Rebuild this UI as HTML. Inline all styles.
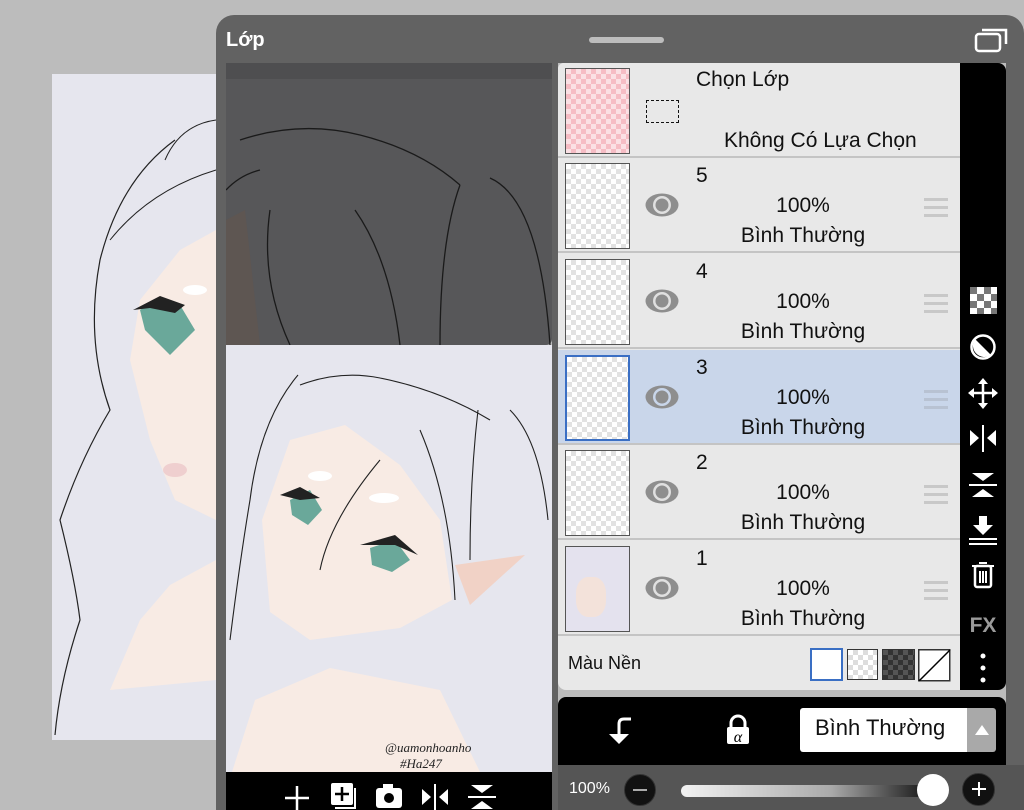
<!DOCTYPE html>
<html><head><meta charset="utf-8"><style>
*{margin:0;padding:0;box-sizing:border-box}
body{width:1024px;height:810px;overflow:hidden;background:#bcbcbc;font-family:"Liberation Sans","Noto Sans CJK SC",sans-serif;position:relative}
.a{position:absolute}
.row{position:absolute;left:558px;width:402px;height:95px;background:#e8e8e8;border-bottom:2px solid #c4c4c4}
.th{position:absolute;left:7px;top:5px;width:65px;height:86px;border:1.5px solid #555;background-color:#fff;background-image:linear-gradient(45deg,#e2e2e2 25%,transparent 25%,transparent 75%,#e2e2e2 75%),linear-gradient(45deg,#e2e2e2 25%,transparent 25%,transparent 75%,#e2e2e2 75%);background-size:10px 10px;background-position:0 0,5px 5px}
.num{position:absolute;left:138px;top:6px;font-size:21px;color:#111}
.pct{position:absolute;left:160px;width:170px;text-align:center;top:36px;font-size:21px;color:#111}
.mode{position:absolute;left:160px;width:170px;text-align:center;top:66px;font-size:21px;color:#111}
.eye{position:absolute;left:87px;top:35px}
.ham{position:absolute;left:366px;top:40px;width:24px}
.ham i{display:block;height:3px;background:#c8c8c8;margin-bottom:5px}
</style></head><body>
<svg class="a" style="left:0;top:0" width="1024" height="810">
<rect x="52" y="74" width="170" height="666" fill="#e6e6ee"/>
<path d="M216 230 L180 250 L140 300 L130 360 L150 440 L175 500 L216 520Z" fill="#f8ebe4"/>
<path d="M216 560 L170 585 L140 620 L110 690 L216 680Z" fill="#f8ebe4"/>
<path d="M175 140 Q120 180 100 260 Q85 340 110 410 Q80 460 60 520 Q75 580 80 620 Q60 680 55 735" fill="none" stroke="#222" stroke-width="1.2"/>
<path d="M216 120 Q180 125 165 160 M216 170 Q150 190 110 240" fill="none" stroke="#222" stroke-width="1"/>
<path d="M140 310 L155 300 L180 305 L195 330 L170 355 L145 330Z" fill="#6aa89a"/>
<path d="M133 310 L160 296 L185 305 L175 313 L150 308Z" fill="#222"/>
<ellipse cx="195" cy="290" rx="12" ry="5" fill="#fff"/>
<ellipse cx="175" cy="470" rx="12" ry="7" fill="#efcfcf"/>
<rect x="226" y="63" width="326" height="282" rx="6" fill="#575759"/>
<rect x="226" y="63" width="326" height="16" fill="#4e4e50"/>
<path d="M226 220 L245 210 L260 345 L226 345Z" fill="#5e5652"/>
<path d="M240 140 Q300 120 360 135 Q420 150 460 185 M460 185 Q440 240 440 345 M490 178 Q540 200 550 345 M355 210 Q390 260 400 345 M270 210 Q260 280 290 345 M226 190 Q240 175 260 170" fill="none" stroke="#1a1a1a" stroke-width="1.3"/>
<rect x="226" y="345" width="326" height="428" fill="#e6e6ee"/>
<path d="M290 440 L345 425 L400 465 L440 520 L452 600 L400 628 L310 640 L270 612 L262 520Z" fill="#f8ebe4"/>
<path d="M255 700 L330 668 L440 690 L480 772 L232 772Z" fill="#f8ebe4"/>
<path d="M455 565 L525 555 L470 605Z" fill="#f1d2c6"/>
<path d="M300 385 Q340 370 380 378 Q440 390 490 420 M510 410 Q540 440 548 520 M298 375 Q260 420 250 500 Q240 560 230 640 M478 410 Q470 480 470 560 M420 430 Q450 500 455 600 M380 460 Q330 520 320 570" fill="none" stroke="#222" stroke-width="1.1"/>
<path d="M290 500 L310 490 L322 510 L308 525 L292 515Z" fill="#6aa89a"/>
<path d="M370 548 L395 540 L410 560 L392 572 L372 565Z" fill="#6aa89a"/>
<path d="M280 495 L300 487 L320 498 L300 500Z M360 545 L395 535 L418 555 L395 545Z" fill="#222"/>
<ellipse cx="320" cy="476" rx="12" ry="5" fill="#fff"/>
<ellipse cx="384" cy="498" rx="15" ry="5" fill="#fff"/>
<text x="385" y="752" font-family="Liberation Serif,serif" font-style="italic" font-size="13" fill="#222">@uamonhoanho</text>
<text x="400" y="768" font-family="Liberation Serif,serif" font-style="italic" font-size="13" fill="#222">#Ha247</text>
</svg>
<div class="a" style="left:216px;top:15px;width:808px;height:48px;background:#626262;border-radius:18px 18px 0 0"></div>
<div class="a" style="left:226px;top:29px;color:#fff;font-weight:bold;font-size:20px">Lớp</div>
<div class="a" style="left:589px;top:37px;width:75px;height:6px;border-radius:3px;background:#bdbdbd"></div>
<svg class="a" style="left:973px;top:26px" width="42" height="28"><rect x="3" y="8" width="24" height="17" rx="3" fill="none" stroke="#fff" stroke-width="2.5"/><path d="M9 4 H33 V18" fill="none" stroke="#fff" stroke-width="2.5"/></svg>
<div class="a" style="left:552px;top:63px;width:6px;height:747px;background:#626262"></div>
<div class="a" style="left:1006px;top:63px;width:18px;height:747px;background:#626262"></div>
<div class="a" style="left:216px;top:63px;width:10px;height:747px;background:#626262"></div>
<div class="a" style="left:226px;top:772px;width:326px;height:38px;background:#000"></div>
<svg class="a" style="left:226px;top:772px" width="326" height="38" stroke="#fff" fill="#fff">
<path d="M71 14 V38 M59 26 H83" stroke-width="2.5"/>
<rect x="105" y="11" width="22" height="22" rx="2" fill="#fff" stroke="none"/><path d="M116 15 V29 M109 22 H123" stroke="#000" stroke-width="2.5"/><path d="M129 16 V36 H109" fill="none" stroke-width="2"/>
<rect x="150" y="16" width="26" height="20" rx="3" stroke="none"/><rect x="157" y="12" width="10" height="6" stroke="none"/><circle cx="163" cy="26" r="5" fill="#000" stroke="none"/>
<path d="M209 12 V38" stroke-width="2"/><path d="M196 17 L205 25 L196 33Z M222 17 L213 25 L222 33Z" stroke="none"/>
<path d="M242 25 H270" stroke-width="2"/><path d="M245 13 H267 L256 21Z M245 37 H267 L256 29Z" stroke="none"/>
</svg>
<div class="a" style="left:558px;top:63px;width:402px;height:627px;background:#e8e8e8;border-radius:6px 0 0 8px;overflow:hidden"></div>
<div class="row" style="top:63px;border-radius:6px 0 0 0">
<div class="th" style="background-image:linear-gradient(45deg,#f6bcc4 25%,transparent 25%,transparent 75%,#f6bcc4 75%),linear-gradient(45deg,#f6bcc4 25%,transparent 25%,transparent 75%,#f6bcc4 75%);background-color:#fbe0e4"></div>
<div class="a" style="left:88px;top:37px;width:33px;height:23px;border:1.5px dashed #111"></div>
<div class="a" style="left:138px;top:5px;font-size:21px;color:#111">Chọn Lớp</div>
<div class="a" style="left:166px;top:66px;font-size:21px;color:#111">Không Có Lựa Chọn</div>
</div>
<div class="row" style="top:158px"><div class="th"></div><svg class="eye" width="34" height="24"><ellipse cx="17" cy="12" rx="16.5" ry="11.5" fill="#8e8e8e"/><circle cx="17" cy="12" r="9" fill="#e0e0e0"/><circle cx="17" cy="12" r="6.5" fill="#8e8e8e"/></svg><div class="num">5</div><div class="pct">100%</div><div class="mode">Bình Thường</div><div class="ham"><i></i><i></i><i></i></div></div>
<div class="row" style="top:254px"><div class="th"></div><svg class="eye" width="34" height="24"><ellipse cx="17" cy="12" rx="16.5" ry="11.5" fill="#8e8e8e"/><circle cx="17" cy="12" r="9" fill="#e0e0e0"/><circle cx="17" cy="12" r="6.5" fill="#8e8e8e"/></svg><div class="num">4</div><div class="pct">100%</div><div class="mode">Bình Thường</div><div class="ham"><i></i><i></i><i></i></div></div>
<div class="row" style="top:350px;background:#c9d6ea"><div class="th" style="border:2px solid #3a6fc4"></div><svg class="eye" width="34" height="24"><ellipse cx="17" cy="12" rx="16.5" ry="11.5" fill="#8e8e8e"/><circle cx="17" cy="12" r="9" fill="#c9d6ea"/><circle cx="17" cy="12" r="6.5" fill="#8e8e8e"/></svg><div class="num">3</div><div class="pct">100%</div><div class="mode">Bình Thường</div><div class="ham"><i style="background:#b8c2d2"></i><i style="background:#b8c2d2"></i><i style="background:#b8c2d2"></i></div></div>
<div class="row" style="top:445px"><div class="th"></div><svg class="eye" width="34" height="24"><ellipse cx="17" cy="12" rx="16.5" ry="11.5" fill="#8e8e8e"/><circle cx="17" cy="12" r="9" fill="#e0e0e0"/><circle cx="17" cy="12" r="6.5" fill="#8e8e8e"/></svg><div class="num">2</div><div class="pct">100%</div><div class="mode">Bình Thường</div><div class="ham"><i></i><i></i><i></i></div></div>
<div class="row" style="top:541px"><div class="th" style="background:#e4e2ee"><div style="position:absolute;left:10px;top:30px;width:30px;height:40px;background:#f3e2da;border-radius:40%"></div></div><svg class="eye" width="34" height="24"><ellipse cx="17" cy="12" rx="16.5" ry="11.5" fill="#8e8e8e"/><circle cx="17" cy="12" r="9" fill="#e0e0e0"/><circle cx="17" cy="12" r="6.5" fill="#8e8e8e"/></svg><div class="num">1</div><div class="pct">100%</div><div class="mode">Bình Thường</div><div class="ham"><i></i><i></i><i></i></div></div>
<div class="a" style="left:568px;top:653px;font-size:18px;color:#111">Màu Nền</div>
<div class="a" style="left:810px;top:648px;width:33px;height:33px;background:#fff;border:2.5px solid #3a6fc4"></div>
<div class="a" style="left:847px;top:649px;width:31px;height:31px;border:1.5px solid #333;background-color:#fff;background-image:linear-gradient(45deg,#ddd 25%,transparent 25%,transparent 75%,#ddd 75%),linear-gradient(45deg,#ddd 25%,transparent 25%,transparent 75%,#ddd 75%);background-size:10px 10px;background-position:0 0,5px 5px"></div>
<div class="a" style="left:882px;top:649px;width:33px;height:31px;border:1.5px solid #333;background-color:#555;background-image:linear-gradient(45deg,#333 25%,transparent 25%,transparent 75%,#333 75%),linear-gradient(45deg,#333 25%,transparent 25%,transparent 75%,#333 75%);background-size:10px 10px;background-position:0 0,5px 5px"></div>
<svg class="a" style="left:918px;top:649px" width="33" height="33"><rect x="0.75" y="0.75" width="31" height="31" fill="#fff" stroke="#333" stroke-width="1.5"/><path d="M1 32 L32 1" stroke="#000" stroke-width="1.5"/></svg>
<div class="a" style="left:960px;top:63px;width:46px;height:627px;background:#000;border-radius:0 8px 8px 0"></div>
<svg class="a" style="left:960px;top:280px" width="46" height="410" fill="#fff" stroke="#fff">
<g stroke="none"><rect x="10" y="7" width="27" height="27" fill="#fff"/><g fill="#777"><rect x="10" y="7" width="7" height="7"/><rect x="24" y="7" width="7" height="7"/><rect x="17" y="14" width="7" height="7"/><rect x="31" y="14" width="6" height="7"/><rect x="10" y="21" width="7" height="7"/><rect x="24" y="21" width="7" height="7"/><rect x="17" y="28" width="7" height="6"/><rect x="31" y="28" width="6" height="6"/></g></g>
<circle cx="23" cy="67" r="11.5" fill="none" stroke-width="2.5"/><path d="M15 59 L31 75 A11.5 11.5 0 0 1 15 59Z" stroke="none"/>
<path d="M23 101 V126 M11 113 H35" stroke-width="2.5"/><path d="M23 98 L18 104 H28Z M23 129 L18 123 H28Z M8 113 L14 108 V118Z M38 113 L32 108 V118Z" stroke="none"/>
<path d="M23 145 V172" stroke-width="2"/><path d="M10 150 L19 158 L10 166Z M36 150 L27 158 L36 166Z" stroke="none"/>
<path d="M9 205 H37" stroke-width="2"/><path d="M12 193 H34 L23 201Z M12 217 H34 L23 209Z" stroke="none"/>
<path d="M19 236 H27 V245 H33 L23 255 L13 245 H19Z" stroke="none"/><path d="M9 259 H37 M9 264 H37" stroke-width="2"/>
<rect x="15" y="286" width="16" height="21" rx="2" fill="none" stroke-width="2.5"/><path d="M12 286 H34 M19 283 H27 M20 291 V303 M23 291 V303 M26 291 V303" stroke-width="2"/>
<text x="23" y="352" text-anchor="middle" font-family="Liberation Sans" font-weight="bold" font-size="21" fill="#9a9a9a" stroke="none">FX</text>
<circle cx="23" cy="376" r="2.5" stroke="none"/><circle cx="23" cy="388" r="2.5" stroke="none"/><circle cx="23" cy="400" r="2.5" stroke="none"/>
</svg>
<div class="a" style="left:558px;top:697px;width:448px;height:68px;background:#000;border-radius:8px 8px 0 0"></div>
<svg class="a" style="left:600px;top:710px" width="160" height="40" fill="#fff" stroke="#fff">
<path d="M31 9 H24 Q19 9 19 14 V28" fill="none" stroke-width="3"/><path d="M9 24 L19 34 L29 24Z" stroke="none"/>
<path d="M131 17 V13 A7 7 0 0 1 145 13 V17" fill="none" stroke-width="3"/><rect x="127" y="17" width="22" height="17" rx="2" stroke="none"/><text x="138" y="32" text-anchor="middle" font-family="Liberation Serif" font-style="italic" font-size="16" fill="#000" stroke="none">α</text>
</svg>
<div class="a" style="left:800px;top:708px;width:167px;height:44px;background:#fff;border-radius:3px 0 0 3px;font-size:22px;color:#111;padding:7px 0 0 15px">Bình Thường</div>
<div class="a" style="left:967px;top:708px;width:29px;height:44px;background:#a9a9a9;border-radius:0 3px 3px 0"></div>
<div class="a" style="left:975px;top:725px;width:0;height:0;border-left:7px solid transparent;border-right:7px solid transparent;border-bottom:10px solid #fff"></div>
<div class="a" style="left:558px;top:765px;width:466px;height:45px;background:#555"></div>
<div class="a" style="left:569px;top:780px;font-size:16px;color:#fff">100%</div>
<div class="a" style="left:624px;top:774px;width:32px;height:32px;border-radius:50%;background:#111;border:1px solid #333"></div>
<div class="a" style="left:633px;top:789px;width:14px;height:2px;background:#aaa"></div>
<div class="a" style="left:681px;top:785px;width:250px;height:12px;border-radius:6px;background:linear-gradient(90deg,#f2f2f2,#aaa 60%,#111)"></div>
<div class="a" style="left:917px;top:774px;width:32px;height:32px;border-radius:50%;background:#fff"></div>
<div class="a" style="left:962px;top:773px;width:33px;height:33px;border-radius:50%;background:#111;border:1px solid #333"></div>
<div class="a" style="left:972px;top:788px;width:14px;height:2px;background:#fff"></div>
<div class="a" style="left:978px;top:782px;width:2px;height:14px;background:#fff"></div>
</body></html>
